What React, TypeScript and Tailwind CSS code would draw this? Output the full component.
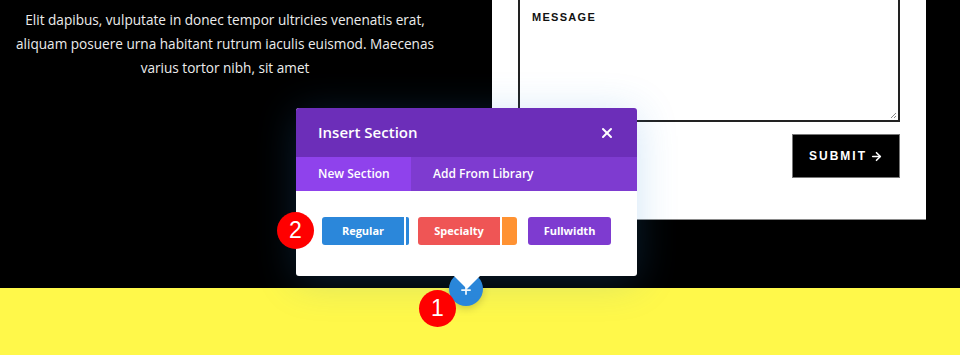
import { X, ArrowRight, Plus } from 'lucide-react';

const sans = "font-['Open_Sans',sans-serif]";

export default function App() {
  return (
    <div className={`relative w-[960px] h-[355px] overflow-hidden ${sans}`}>
      {/* dark section */}
      <div className="flex h-[288px] bg-black">
        <div className="w-[450px] shrink-0 pt-[8px] text-center text-[13.6px] leading-[24px] text-[#ececec]">
          <p>
            Elit dapibus, vulputate in donec tempor ultricies venenatis erat,
            aliquam posuere urna habitant rutrum iaculis euismod. Maecenas
            varius tortor nibh, sit amet
          </p>
        </div>
        <div className="ml-[42px] flex h-[220px] w-[434px] flex-col border-b border-[#8a8a8a] bg-white pl-[26px] pr-[26px]">
          <div className="relative h-[122px] border-2 border-t-0 border-[#222] pl-[12px] pt-[3px]">
            <span className="font-['Liberation_Sans',sans-serif] text-[11px] font-bold tracking-[1.3px] text-[#111]">
              MESSAGE
            </span>
            <svg
              className="absolute bottom-[1px] right-[1px]"
              width="8"
              height="8"
              viewBox="0 0 8 8"
            >
              <path d="M7 2 L2 7 M7 5 L5 7" stroke="#888" strokeWidth="1" />
            </svg>
          </div>
          <div className="mt-[12px] flex justify-end">
            <button className="flex h-[44px] w-[108px] items-center justify-center gap-[3px] border border-[#777] bg-black font-['Liberation_Sans',sans-serif] text-[12px] font-bold tracking-[2px] text-white">
              SUBMIT
              <ArrowRight className="h-[13px] w-[13px]" strokeWidth={3} />
            </button>
          </div>
        </div>
      </div>
      {/* yellow section */}
      <div className="h-[67px] bg-[#fff84a]" />

      {/* add section button */}
      <div className="absolute left-[449px] top-[272px] flex h-[34px] w-[34px] items-center justify-center rounded-full bg-[#2b87da] shadow-[0_2px_8px_rgba(0,0,0,0.2)]">
        <Plus className="mt-[2px] h-[14px] w-[14px] text-white" strokeWidth={3} />
      </div>

      {/* modal */}
      <div className="absolute left-[296px] top-[108px] w-[341px] rounded-[3px] bg-white shadow-[0_5px_40px_rgba(43,135,218,0.22)]">
        <div className="flex h-[49px] items-center justify-between rounded-t-[3px] bg-[#6c2eb9] pl-[22px] pr-[22px]">
          <span className="text-[15px] font-semibold text-white">Insert Section</span>
          <X className="h-[16px] w-[16px] text-white" strokeWidth={3} />
        </div>
        <div className="flex h-[34px] bg-[#7e3bd0] text-[12px] font-semibold text-white">
          <div className="flex w-[115px] items-center bg-[#8f42ec] pl-[22px]">New Section</div>
          <div className="flex items-center pl-[22px]">Add From Library</div>
        </div>
        <div className="flex h-[85px] items-start pl-[26px] pt-[26px] text-[11px] font-bold text-white">
          <div className="flex h-[28px] w-[82px] items-center justify-center rounded-l-[3px] bg-[#2b87da]">
            Regular
          </div>
          <div className="ml-[2px] h-[28px] w-[3px] rounded-r-[2px] bg-[#2b87da]" />
          <div className="ml-[9px] flex h-[28px] w-[82px] items-center justify-center rounded-l-[3px] bg-[#ef5555]">
            Specialty
          </div>
          <div className="ml-[2px] h-[28px] w-[15px] rounded-r-[3px] bg-[#ff9232]" />
          <div className="ml-[11px] flex h-[28px] w-[83px] items-center justify-center rounded-[3px] bg-[#7e3bd0]">
            Fullwidth
          </div>
        </div>
        {/* arrow */}
        <div className="absolute left-1/2 top-full h-0 w-0 -translate-x-1/2 border-x-[13px] border-t-[13px] border-x-transparent border-t-white" />
      </div>

      {/* step badges */}
      <div className="absolute left-[277px] top-[212px] flex h-[37px] w-[37px] items-center justify-center rounded-full bg-[#ff0000] font-['Liberation_Sans',sans-serif] text-[23px] text-white">
        2
      </div>
      <div className="absolute left-[419px] top-[290px] flex h-[37px] w-[37px] items-center justify-center rounded-full bg-[#ff0000] font-['Liberation_Sans',sans-serif] text-[23px] text-white">
        1
      </div>
    </div>
  );
}
